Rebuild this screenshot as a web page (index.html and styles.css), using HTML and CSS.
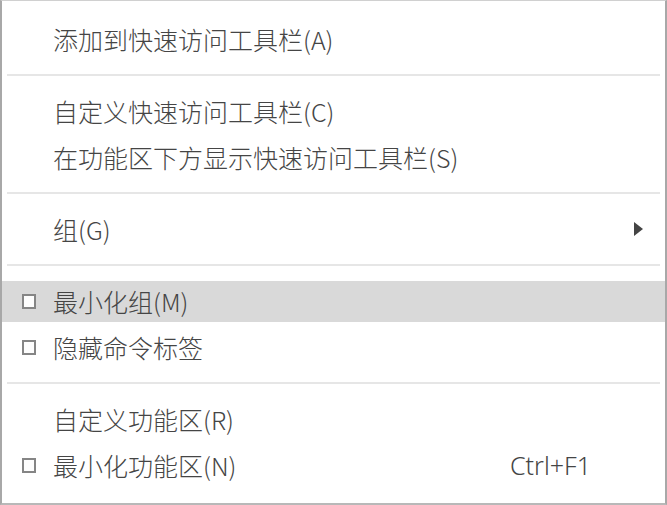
FILE: index.html
```html
<!DOCTYPE html>
<html>
<head>
  <meta charset="utf-8">
  <title>快速访问工具栏菜单</title>
  <link rel="stylesheet" href="styles.css">
</head>
<body>
  <div class="menu">
    <div class="menu-item">
      <span class="check-col"></span>
      <span class="label">添加到快速访问工具栏(A)</span>
    </div>

    <div class="separator"></div>

    <div class="menu-item">
      <span class="check-col"></span>
      <span class="label">自定义快速访问工具栏(C)</span>
    </div>
    <div class="menu-item">
      <span class="check-col"></span>
      <span class="label">在功能区下方显示快速访问工具栏(S)</span>
    </div>

    <div class="separator"></div>

    <div class="menu-item">
      <span class="check-col"></span>
      <span class="label">组(G)</span>
      <span class="submenu-arrow"></span>
    </div>

    <div class="separator"></div>

    <div class="menu-item active">
      <span class="check-col"><span class="checkbox"></span></span>
      <span class="label">最小化组(M)</span>
    </div>
    <div class="menu-item">
      <span class="check-col"><span class="checkbox"></span></span>
      <span class="label">隐藏命令标签</span>
    </div>

    <div class="separator"></div>

    <div class="menu-item">
      <span class="check-col"></span>
      <span class="label">自定义功能区(R)</span>
    </div>
    <div class="menu-item">
      <span class="check-col"><span class="checkbox"></span></span>
      <span class="label">最小化功能区(N)</span>
      <span class="shortcut">Ctrl+F1</span>
    </div>
  </div>
</body>
</html>
```

FILE: styles.css
```css
* {
  box-sizing: border-box;
  margin: 0;
  padding: 0;
}

html, body {
  width: 100%;
  height: 100%;
  overflow: hidden;
  background-color: #ffffff;
  font-family: "Noto Sans CJK SC", "Noto Sans", sans-serif;
  color: #454545;
}

/* Menu frame */
.menu {
  height: 100vh;
  padding-top: 15px;
  border-top: 1px solid #d0d0d0;
  border-left: 2px solid #a8a8a8;
  border-right: 2px solid #a8a8a8;
  border-bottom: 2px solid #b8b8b8;
}

/* Items */
.menu-item {
  display: flex;
  align-items: center;
  height: 46px;
  padding-right: 22px;
  font-size: 25px;
  font-weight: 300;
  line-height: 46px;
}

/* highlight band is a bit shorter than the row */
.menu-item.active {
  background: linear-gradient(to bottom,
    transparent 3px,
    #d9d9d9 3px,
    #d9d9d9 calc(100% - 2px),
    transparent calc(100% - 2px));
}

.check-col {
  display: flex;
  align-items: center;
  flex-shrink: 0;
  width: 51px;
  height: 100%;
  padding-left: 20px;
}

.checkbox {
  flex-shrink: 0;
  width: 14px;
  height: 15px;
  border: 2px solid #858585;
  background-color: #fdfdfd;
}

.label {
  white-space: nowrap;
}

.shortcut {
  margin-left: auto;
  margin-right: 52px;
  font-family: "Noto Sans", sans-serif;
  font-size: 25px;
  font-weight: 300;
}

.submenu-arrow {
  margin-left: auto;
  width: 0;
  height: 0;
  border-top: 7px solid transparent;
  border-bottom: 7px solid transparent;
  border-left: 9px solid #444444;
}

/* Separators */
.separator {
  height: 2px;
  margin: 12px 5px;
  background-color: #e6e6e6;
}
```
